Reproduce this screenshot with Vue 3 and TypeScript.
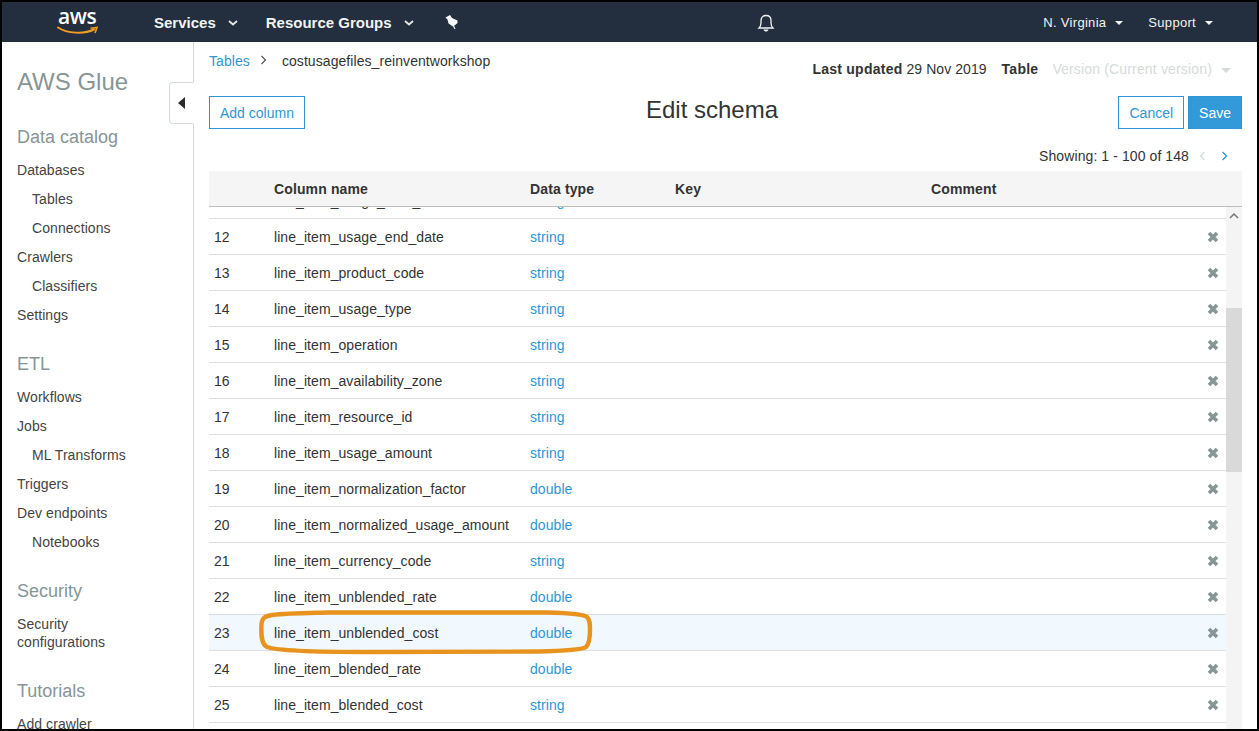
<script setup lang="ts">
interface Row { n: number; name: string; type: string; active?: boolean }
const rows: Row[] = [
  { n: 11, name: 'line_item_usage_start_date', type: 'string' },
  { n: 12, name: 'line_item_usage_end_date', type: 'string' },
  { n: 13, name: 'line_item_product_code', type: 'string' },
  { n: 14, name: 'line_item_usage_type', type: 'string' },
  { n: 15, name: 'line_item_operation', type: 'string' },
  { n: 16, name: 'line_item_availability_zone', type: 'string' },
  { n: 17, name: 'line_item_resource_id', type: 'string' },
  { n: 18, name: 'line_item_usage_amount', type: 'string' },
  { n: 19, name: 'line_item_normalization_factor', type: 'double' },
  { n: 20, name: 'line_item_normalized_usage_amount', type: 'double' },
  { n: 21, name: 'line_item_currency_code', type: 'string' },
  { n: 22, name: 'line_item_unblended_rate', type: 'double' },
  { n: 23, name: 'line_item_unblended_cost', type: 'double', active: true },
  { n: 24, name: 'line_item_blended_rate', type: 'double' },
  { n: 25, name: 'line_item_blended_cost', type: 'string' },
  { n: 26, name: 'line_item_line_item_description', type: 'string' },
]
interface Group { title?: string; items: { label: string; sub?: boolean; tall?: boolean }[] }
const groups: Group[] = [
  { title: 'Data catalog', items: [
    { label: 'Databases' }, { label: 'Tables', sub: true }, { label: 'Connections', sub: true },
    { label: 'Crawlers' }, { label: 'Classifiers', sub: true }, { label: 'Settings' } ] },
  { title: 'ETL', items: [
    { label: 'Workflows' }, { label: 'Jobs' }, { label: 'ML Transforms', sub: true },
    { label: 'Triggers' }, { label: 'Dev endpoints' }, { label: 'Notebooks', sub: true } ] },
  { title: 'Security', items: [ { label: 'Security configurations', tall: true } ] },
  { title: 'Tutorials', items: [ { label: 'Add crawler' } ] },
]
</script>

<template>
  <div class="frame">
    <header class="nav">
      <div class="logo">
        <span class="logo-text">aws</span>
        <svg class="smile" width="42" height="10" viewBox="0 0 42 10">
          <path d="M1 1.500C10 7.500 27 8.500 37 3.500" fill="none" stroke="#f39c1f" stroke-width="2" stroke-linecap="round" />
          <path d="M33.500 2.200L40 1.500L38 7" fill="none" stroke="#f39c1f" stroke-width="1.600" />
        </svg>
      </div>
      <span class="nav-link">Services</span>
      <svg class="chev" width="10" height="6" viewBox="0 0 10 6"><path d="M1 1l4 3.500L9 1" fill="none" stroke="#e8e8e8" stroke-width="1.800" /></svg>
      <span class="nav-link second">Resource Groups</span>
      <svg class="chev" width="10" height="6" viewBox="0 0 10 6"><path d="M1 1l4 3.500L9 1" fill="none" stroke="#e8e8e8" stroke-width="1.800" /></svg>
      <svg class="pin" width="13" height="14" viewBox="0 0 13 14">
        <path d="M0.500 2.500L5 0L7 3L12.500 5.500L12.500 8L9.500 10.500L8 11.500L3.500 8.500L2.500 4.500Z" fill="#f7f8f8" />
        <path d="M8 10L10 14" fill="none" stroke="#f7f8f8" stroke-width="1.100" />
      </svg>
      <div class="nav-center">
        <svg width="18" height="20" viewBox="0 0 18 20">
          <path d="M2 15c1.500-1.500 2-2.500 2-5V7.500C4 4.500 6 2.500 9 2.500s5 2 5 5V10c0 2.500.5 3.500 2 5z" fill="none" stroke="#f2f3f3" stroke-width="1.300" />
          <path d="M6.500 16.500h5c-.5 1.500-1.500 2-2.500 2s-2-.5-2.500-2z" fill="#f2f3f3" />
        </svg>
      </div>
      <span class="nav-right">N. Virginia</span><span class="caret light"></span>
      <span class="nav-right support">Support</span><span class="caret light"></span>
    </header>

    <div class="body">
      <aside class="side">
        <h1 class="brand">AWS Glue</h1>
        <section v-for="g in groups" :key="g.title" class="group">
          <h2 class="group-title">{{ g.title }}</h2>
          <a v-for="i in g.items" :key="i.label" class="item" :class="{ sub: i.sub, tall: i.tall }">{{ i.label }}</a>
        </section>
        <button class="collapse" type="button" aria-label="Collapse"><span class="tri"></span></button>
      </aside>

      <main class="main">
        <div class="top">
          <div class="crumbs">
            <a class="link">Tables</a>
            <svg width="8" height="10" viewBox="0 0 8 10"><path d="M1.500 1l4 4-4 4" fill="none" stroke="#555" stroke-width="1.200" /></svg>
            <span>costusagefiles_reinventworkshop</span>
          </div>
          <div class="meta">
            <b>Last updated</b> 29 Nov 2019
            <b class="tbl">Table</b>
            <span class="version">Version (Current version)</span><span class="caret grey"></span>
          </div>
        </div>

        <div class="title-row">
          <div class="left"><button class="btn" type="button">Add column</button></div>
          <div class="page-title">Edit schema</div>
          <div class="right">
            <button class="btn" type="button">Cancel</button>
            <button class="btn primary" type="button">Save</button>
          </div>
        </div>

        <div class="pager">
          Showing: 1 - 100 of 148
          <svg class="pg first" width="7" height="10" viewBox="0 0 7 10"><path d="M5.500 1l-4 4 4 4" fill="none" stroke="#d5dbdb" stroke-width="1.300" /></svg>
          <svg class="pg" width="7" height="10" viewBox="0 0 7 10"><path d="M1.500 1l4 4-4 4" fill="none" stroke="#2e96d6" stroke-width="1.300" /></svg>
        </div>

        <div class="thead cols">
          <span></span><span>Column name</span><span>Data type</span><span>Key</span><span>Comment</span>
        </div>

        <div class="scroller">
          <div class="rows">
            <div v-for="r in rows" :key="r.n" class="row cols" :class="{ active: r.active }">
              <span>{{ r.n }}</span>
              <span>{{ r.name }}</span>
              <a class="link">{{ r.type }}</a>
              <span></span>
              <span></span>
              <svg class="del" width="12" height="12" viewBox="0 0 12 12">
                <path d="M2 2l8 8M10 2l-8 8" fill="none" stroke="#879596" stroke-width="3.600" />
              </svg>
            </div>
          </div>
          <div class="scrollbar">
            <svg class="up" width="10" height="6" viewBox="0 0 10 6"><path d="M1 5l4-4 4 4" fill="none" stroke="#777" stroke-width="1.500" /></svg>
            <div class="thumb"></div>
          </div>
        </div>
      </main>
    </div>

    <svg class="callout" width="336" height="46" viewBox="0 0 336 46">
      <path d="M3.500 14C4 8 7 6 14 5C30 3 50 3 70 2.500L290 2.500C310 3 326 4 329 7C332 10 332 14 332 20C332 28 331 34 328 37C324 40 305 41 280 41.500L110 42C60 42 20 41 9 37C3 34 3 24 3.500 14Z" fill="none" stroke="#e8931e" stroke-width="4.400" />
    </svg>
  </div>
</template>

<style>
html, body { margin: 0; padding: 0; }
</style>

<style scoped>
.frame {
  position: relative;
  box-sizing: border-box;
  width: 1259px;
  height: 731px;
  border: 2px solid #000;
  background: #fff;
  overflow: hidden;
  font-family: "Liberation Sans", Arial, sans-serif;
  font-size: 14px;
  letter-spacing: 0.07px;
  color: #333;
  display: flex;
  flex-direction: column;
}
.nav {
  flex: none;
  height: 40px;
  box-sizing: border-box;
  padding-top: 1px;
  background: #232f3e;
  display: flex;
  align-items: center;
  color: #fff;
}
.logo {
  width: 152px;
  flex: none;
  display: flex;
  flex-direction: column;
  align-items: flex-start;
  padding-left: 55px;
  box-sizing: border-box;
  margin-top: -1px;
}
.logo-text {
  font-family: "Open Sans", sans-serif;
  font-size: 21px;
  font-weight: 600;
  line-height: 15px;
  height: 17px;
  letter-spacing: -0.4px;
  color: #fff;
  padding-left: 1px;
}
.nav-link { font-weight: 700; font-size: 15px; letter-spacing: 0; color: #f2f3f3; }
.second { margin-left: 28px; }
.chev { margin-left: 12px; margin-top: 1px; }
.pin { margin-left: 31px; margin-top: -1px; }
.nav-center { flex: 1; display: flex; justify-content: center; padding-left: 32px; box-sizing: border-box; }
.nav-right { font-size: 13px; letter-spacing: 0.3px; color: #f2f3f3; }
.support { margin-left: 25px; }
.caret { display: inline-block; width: 0; height: 0; border-left: 4px solid transparent; border-right: 4px solid transparent; }
.caret.light { border-top: 4px solid #f2f3f3; margin-left: 9px; }
.nav > .caret:last-child { margin-right: 44px; }
.body { flex: 1; min-height: 0; display: flex; }
.side {
  position: relative;
  flex: none;
  width: 176px;
  border-right: 1px solid #d5dbdb;
  padding-left: 15px;
}
.brand { margin: 26px 0 0; font-size: 24px; line-height: 27px; font-weight: 400; letter-spacing: 0; color: #879596; }
.group-title { margin: 31px 0 8px; font-size: 18px; line-height: 22px; font-weight: 400; letter-spacing: 0; color: #879596; }
.group + .group .group-title { margin-top: 23px; }
.item { display: block; height: 29px; line-height: 29px; color: #444; }
.item.sub { padding-left: 15px; }
.item.tall { height: 47px; line-height: 18px; padding-top: 5px; width: 110px; box-sizing: border-box; }
.collapse {
  position: absolute;
  left: 167px;
  top: 40px;
  width: 25px;
  height: 42px;
  padding: 0;
  box-sizing: border-box;
  background: #fff;
  border: 1px solid #d5dbdb;
  border-right: 1px solid #fff;
  border-radius: 4px 0 0 4px;
  display: flex;
  align-items: center;
  justify-content: center;
}
.tri { width: 0; height: 0; border-top: 6px solid transparent; border-bottom: 6px solid transparent; border-right: 7px solid #2b2b2b; }
.main { flex: 1; min-width: 0; padding: 0 15px; display: flex; flex-direction: column; }
.top { height: 54px; flex: none; display: flex; justify-content: space-between; }
.crumbs { display: flex; align-items: center; height: 38px; }
.crumbs svg { margin: 0 14px 2px 10px; }
.link { color: #2e96d6; }
.meta { padding-top: 17px; line-height: 20px; margin-right: 11px; color: #333; }
.meta b { font-weight: 700; letter-spacing: 0.25px; }
.tbl { margin-left: 11px; }
.version { margin-left: 14px; color: #d5dbdb; letter-spacing: 0.16px; }
.caret.grey { border-top: 5px solid #d5dbdb; border-left-width: 5px; border-right-width: 5px; margin-left: 9px; vertical-align: 1px; }
.title-row { flex: none; height: 33px; display: grid; grid-template-columns: 437px auto 1fr; align-items: center; }
.page-title { font-size: 24px; letter-spacing: 0; color: #333; position: relative; top: -3px; }
.right { display: flex; justify-content: flex-end; gap: 4px; }
.btn {
  height: 33px;
  padding: 0 10px;
  box-sizing: border-box;
  font: inherit;
  letter-spacing: 0;
  color: #2e96d6;
  background: #fff;
  border: 1px solid #2e96d6;
}
.btn.primary { background: #339ad9; color: #fff; }
.pager { flex: none; height: 42px; padding-top: 11px; box-sizing: border-box; display: flex; align-items: center; justify-content: flex-end; padding-right: 14px; line-height: 24px; letter-spacing: 0.09px; }
.pg { margin-left: 15px; }
.pg.first { margin-left: 10px; }
.cols { display: grid; grid-template-columns: 65px 256px 145px 256px 1fr; align-items: center; }
.thead { flex: none; height: 36px; box-sizing: border-box; background: #f5f5f5; border-bottom: 1px solid #bdbdbd; font-weight: 700; letter-spacing: 0.13px; color: #333; }
.scroller { flex: 1; min-height: 0; position: relative; overflow: hidden; display: flex; }
.rows { flex: 1; min-width: 0; margin-top: -24px; }
.row { position: relative; height: 36px; box-sizing: border-box; border-bottom: 1px solid #dfdfdf; }
.row > span:first-child { padding-left: 5px; }
.row.active { background: #f1f8fe; }
.del { position: absolute; right: 7px; top: 12px; }
.scrollbar { flex: none; width: 16px; background: #f4f4f4; position: relative; }
.up { position: absolute; left: 3px; top: 6px; }
.thumb { position: absolute; left: 0; right: 0; top: 101px; height: 164px; background: #d9d9d9; }
.callout { position: absolute; left: 256px; top: 608px; pointer-events: none; }
</style>
